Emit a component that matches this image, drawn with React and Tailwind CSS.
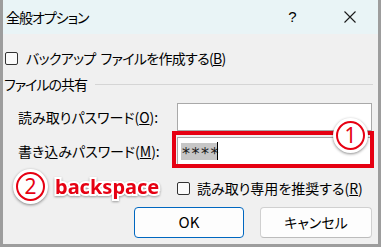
import React from "react";

const font = {
  fontFamily: '"Noto Sans CJK JP", "Noto Sans", sans-serif',
  fontFeatureSettings: '"palt"',
};

const Checkbox = () => (
  <span className="block w-[13px] h-[13px] border border-[#333333] rounded-[2px] bg-[#fbfbfb] shrink-0" />
);

const Circled = ({ n, className }) => (
  <div
    className={`absolute w-[35px] h-[35px] rounded-full bg-white flex items-center justify-center shadow-[0_1px_3px_rgba(0,0,0,0.45)] ${className}`}
  >
    <div className="w-[29px] h-[29px] rounded-full border-2 border-[#e60012] flex items-center justify-center">
      <span className="text-[#e60012] text-[21px] leading-none font-['Noto_Sans',sans-serif]">{n}</span>
    </div>
  </div>
);

const App = () => {
  return (
    <div
      className="relative w-[381px] h-[247px] bg-[#f0f0f0] border-x-[3px] border-b-[3px] border-[#9d9d9d] text-[14px] text-black overflow-hidden"
      style={font}
    >
      {/* Title bar */}
      <div className="h-[34px] bg-[#e9f4f6] flex items-center">
        <span className="pl-[3px] text-[14px] tracking-[-1px]">全般オプション</span>
        <div className="ml-auto flex h-full">
          <div className="w-[57px] flex items-center justify-center text-[15px] font-['Liberation_Sans',sans-serif]">?</div>
          <div className="w-[57px] flex items-center justify-center">
            <svg width="12" height="12" viewBox="0 0 12 12">
              <path d="M0.5 0.5L11.5 11.5M11.5 0.5L0.5 11.5" stroke="#1a1a1a" strokeWidth="1.1" fill="none" />
            </svg>
          </div>
        </div>
      </div>

      {/* Body */}
      <div className="flex flex-col">
        <div className="mt-[14px] h-[20px] flex items-center">
          <div className="ml-[2px]"><Checkbox /></div>
          <span className="ml-[8px] tracking-[-0.7px] flex">
            <span>バックアップ</span>
            <span className="ml-[5px]">ファイルを作成する(<span className="underline">B</span>)</span>
          </span>
        </div>

        <div className="mt-[6px] h-[20px] flex items-center">
          <span className="ml-[1px] tracking-[-1px]">ファイルの共有</span>
          <div className="flex-1 h-px bg-[#d5d5d5] ml-[8px] mr-[5px]" />
        </div>

        <div className="mt-[9px] h-[28px] flex items-center">
          <span className="pl-[15px] w-[174px]">
            読み取りパスワード(<span className="underline">O</span>):
          </span>
          <div className="w-[195px] h-[28px] border border-[#a9a9a9] bg-white" />
        </div>

        <div className="mt-[6px] h-[28px] flex items-center">
          <span className="pl-[15px] w-[174px]">
            書き込みパスワード(<span className="underline">M</span>):
          </span>
          <div className="w-[195px] h-[28px] border border-[#a9a9a9] bg-white flex items-center pl-[3px]">
            <span className="h-[17px] w-[36px] bg-[#c6c6c6] text-[#1a1a1a] text-[16px] leading-[13px] pt-[4px] tracking-[1.5px] pl-[1px] font-['DejaVu_Sans',sans-serif]">****</span>
            <span className="w-px h-[18px] bg-black" />
          </div>
        </div>

        <div className="mt-[13px] h-[20px] flex items-center">
          <div className="ml-[174px]"><Checkbox /></div>
          <span className="ml-[7px]">
            読み取り専用を推奨する(<span className="underline">R</span>)
          </span>
        </div>

        <div className="mt-[9px] flex">
          <button className="ml-[131px] w-[110px] h-[31px] rounded-[4px] border border-[#0067c0] bg-[#fdfdfd] text-[15px]">
            OK
          </button>
          <button className="ml-[16px] w-[112px] h-[31px] rounded-[4px] border border-[#d0d0d0] border-b-[#bcbcbc] bg-[#fdfdfd] text-[14px]">
            キャンセル
          </button>
        </div>
      </div>

      {/* Annotations */}
      <div className="absolute left-[169px] top-[131px] w-[202px] h-[37px] border-4 border-[#e60012]" />
      <Circled n="1" className="left-[330px] top-[118px]" />
      <Circled n="2" className="left-[10px] top-[169px]" />
      <span
        className="absolute left-[52px] top-[173px] text-[20px] font-bold text-[#e60012] leading-[28px] font-['Noto_Sans',sans-serif] [-webkit-text-stroke:4px_white] [paint-order:stroke_fill] drop-shadow-[0_1px_1px_rgba(0,0,0,0.35)]"
      >
        backspace
      </span>
    </div>
  );
};

export default App;
